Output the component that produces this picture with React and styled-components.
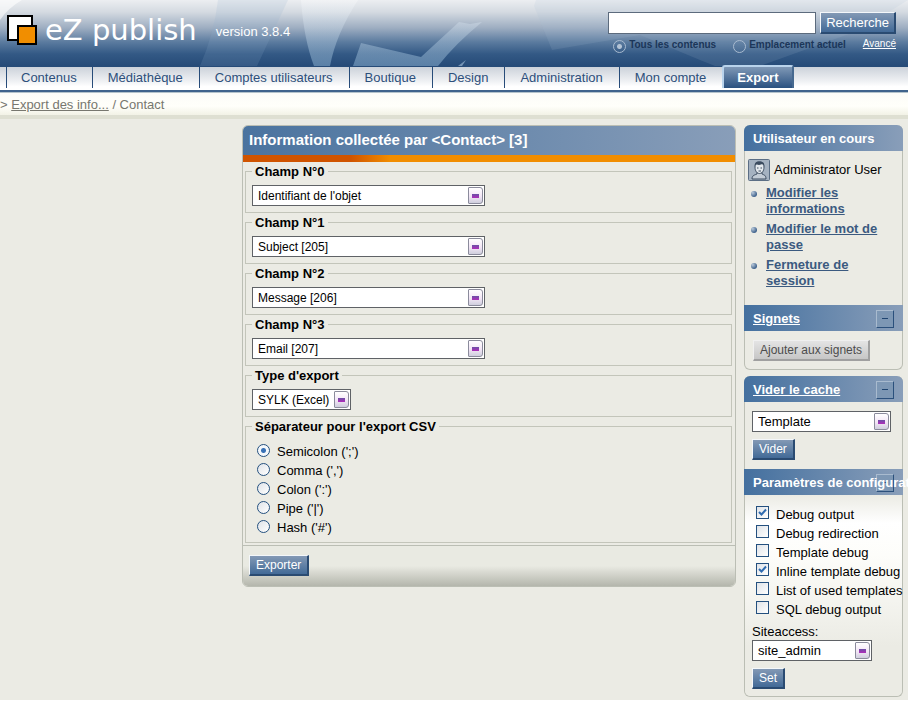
import React from "react";
import styled, { createGlobalStyle, css } from "styled-components";

const GlobalStyle = createGlobalStyle`
  *, *::before, *::after { box-sizing: border-box; }
  html { background: #ffffff; }
  body {
    margin: 0;
    color: #000000;
    font: 13px/16px "Liberation Sans", Arial, sans-serif;
    overflow-x: hidden;
  }
  button, input, select { font: inherit; margin: 0; }
`;

const Page = styled.div`
  background: #ebebe4;
`;

/* ---------- Header ---------- */

const Header = styled.header`
  position: relative;
  display: flex;
  justify-content: space-between;
  height: 66px;
  padding: 0 12px 0 7px;
  overflow: hidden;
  background: linear-gradient(#eceef1 0, #d4dae1 12px, #9dadc1 28px, #5b7b9f 42px, #335985 54px, #264b78 66px);
`;

const Backdrop = styled.svg`
  position: absolute;
  inset: 0;
  width: 100%;
  height: 100%;
`;

const Brand = styled.div`
  position: relative;
  display: flex;
  align-items: center;
  height: 60px;
  color: #ffffff;
`;

const LogoMark = styled.svg`
  width: 30px;
  height: 30px;
`;

const BrandName = styled.span`
  margin-left: 8px;
  font: 400 29px/36px "DejaVu Sans", Verdana, sans-serif;
`;

const Version = styled.span`
  margin: 3px 0 0 19px;
`;

const SearchForm = styled.form`
  position: relative;
  display: grid;
  align-content: start;
  gap: 3px;
  padding-top: 12px;
`;

const SearchLine = styled.div`
  display: flex;
  gap: 4px;
  align-items: center;
`;

const SearchInput = styled.input`
  width: 208px;
  height: 22px;
  padding: 0 4px;
  border: 1px solid #5c6b7d;
  background: #ffffff;
`;

const ScopeLine = styled.div`
  display: flex;
  justify-content: space-between;
  padding-left: 5px;
  font-size: 10px;
`;

const ScopeLabel = styled.label`
  display: flex;
  align-items: center;
  gap: 3px;
  color: #1b3659;
  font-weight: bold;
`;

const ScopeRadio = styled.input`
  appearance: none;
  width: 13px;
  height: 13px;
  margin-top: 2px;
  border: 1px solid #a9bbd0;
  border-radius: 50%;
  &:checked {
    background: radial-gradient(circle, #b3c3d5 0 2px, transparent 3px);
  }
`;

const AdvancedLink = styled.a`
  color: #ffffff;
  line-height: 14px;
`;

const Button = styled.button`
  height: ${(p) => (p.$tall ? 22 : 21)}px;
  padding: 0 ${(p) => (p.$tall ? 7 : 6)}px;
  white-space: nowrap;
  font-size: ${(p) => (p.$tall ? 13 : 12)}px;
  line-height: 18px;
  ${(p) =>
    p.$tall &&
    css`
      padding: 0 5px;
    `}
  ${(p) =>
    p.$muted
      ? css`
          color: #4c4c4c;
          border-style: solid;
          border-color: #f0f0f0 #a0a0a0 #a0a0a0 #f0f0f0;
          border-width: 1px 2px 2px 1px;
          background: linear-gradient(#e4e4e4, #c6c6c6);
        `
      : css`
          color: #ffffff;
          border-style: solid;
          border-color: #f4f7fa #2a4b72 #2a4b72 #f4f7fa;
          border-width: 1px 2px 2px 1px;
          background: linear-gradient(#8399b5, #426a97);
        `}
`;

/* ---------- Tabs and path ---------- */

const Tabs = styled.nav`
  display: flex;
  align-items: flex-end;
  height: 26px;
  padding: 0 0 2px 6px;
  border-top: 1px solid #264b78;
  border-bottom: 2px solid #3f638c;
  background: linear-gradient(#ccd2da, #eef0f3 60%, #ffffff 85%);
`;

const Tab = styled.a`
  height: 21px;
  padding: 0 16px 0 15px;
  border-left: 1px solid #274c79;
  color: #2d4f7b;
  line-height: 21px;
  text-decoration: none;
  white-space: nowrap;
  &:first-child { padding: 0 15px 0 14px; }
  ${(p) =>
    p.$active &&
    css`
      position: relative;
      height: 23px;
      padding: 0 13px;
      border: 2px solid #b9d3ec;
      border-right-color: #46698f;
      border-bottom: 0;
      border-radius: 3px 3px 0 0;
      background: linear-gradient(#7f98b6, #2a5180);
      color: #ffffff;
      font-weight: bold;
    `}
`;

const Path = styled.nav`
  height: 27px;
  padding-top: 4px;
  border-top: 1px solid #b4c3cb;
  border-bottom: 4px solid #dedfd2;
  background: linear-gradient(#fcfcf8, #fffffa 60%, #f2f2e6);
  color: #77776f;
  white-space: pre;
`;

const PathLink = styled.a`
  color: #77776f;
`;

/* ---------- Content ---------- */

const Columns = styled.div`
  display: flex;
  align-items: flex-start;
  gap: 8px;
  padding: 6px 5px 3px 0;
`;

const LeftColumn = styled.div`
  flex: 0 0 234px;
`;

const Panel = styled.form`
  flex: 1;
  min-width: 0;
  border: 1px solid #bbbeb4;
  border-radius: 6px;
  overflow: hidden;
`;

const PanelTitle = styled.h1`
  margin: -1px -1px 0;
  padding: 7px;
  background: linear-gradient(90deg, #4a739f, #899eb9);
  color: #ffffff;
  font-size: 15px;
  line-height: 16px;
`;

const Stripe = styled.div`
  height: 7px;
  margin: 0 -1px;
  background: linear-gradient(90deg, #d05400 22%, #f18d00 30%);
`;

const Fields = styled.div`
  padding: 0 3px 2px 2px;
`;

const Fieldset = styled.fieldset`
  min-width: 0;
  margin: 0;
  padding: ${(p) => (p.$last ? "5px 6px 4px" : "5px 6px 6px")};
  border: 1px solid #c3c5ba;
`;

const Legend = styled.legend`
  padding: 2px 3px 0;
  font-weight: bold;
`;

const PanelFooter = styled.div`
  height: 41px;
  padding: 9px 6px;
  border-top: 1px solid #bbbeb4;
  background: linear-gradient(#e9eae2 50%, #d9dad2 65%, #b4b6ac);
`;

const SelectBox = styled.span`
  position: relative;
  display: block;
  width: ${(p) => p.$width}px;
  max-width: 100%;
`;

const NativeSelect = styled.select`
  appearance: none;
  display: block;
  width: 100%;
  height: 21px;
  padding: 0 20px 0 5px;
  border: 1px solid #5f6266;
  border-radius: 0;
  background: #ffffff;
  color: #000000;
  font-size: ${(p) => (p.$large ? 13 : 12)}px;
`;

const SelectMark = styled.span`
  position: absolute;
  top: 2px;
  right: 2px;
  display: grid;
  place-items: center;
  width: 15px;
  height: 17px;
  border: 1px solid #8b8b9c;
  border-radius: 1px 3px 3px 1px;
  background: linear-gradient(#ffffff, #f3e6f6 55%, #cfcfdd);
  pointer-events: none;
  &::after {
    content: "";
    width: 7px;
    height: 4px;
    background: linear-gradient(#6a50a5, #b02cba);
  }
`;

const OptionList = styled.div`
  display: grid;
  grid-auto-rows: 19px;
  padding: ${(p) => (p.$inset ? "3px 5px 0" : "0 4px")};
`;

const Option = styled.label`
  display: flex;
  align-items: flex-start;
  gap: 7px;
  line-height: ${(p) => (p.$tight ? 17 : 19)}px;
  white-space: nowrap;
`;

const Radio = styled.input`
  appearance: none;
  flex: none;
  width: 13px;
  height: 13px;
  margin-top: 1px;
  border: 1px solid #24507f;
  border-radius: 50%;
  background: linear-gradient(135deg, #dfe3e8, #ffffff);
  &:checked {
    background: radial-gradient(circle, #3871b6 0 2px, #f4f8fc 3px);
  }
`;

const CheckFrame = styled.span`
  position: relative;
  display: block;
  width: 13px;
  height: 13px;
  margin-top: 1px;
`;

const Checkbox = styled.input`
  appearance: none;
  display: block;
  width: 13px;
  height: 13px;
  border: 1px solid #24507f;
  background: linear-gradient(135deg, #dfe3e8, #ffffff);
  & + svg { visibility: hidden; }
  &:checked + svg { visibility: visible; }
`;

const CheckMark = styled.svg`
  position: absolute;
  inset: 0;
  pointer-events: none;
`;

/* ---------- Sidebar ---------- */

const Sidebar = styled.aside`
  display: grid;
  flex: 0 0 159px;
  gap: 6px;
  min-width: 0;
`;

const SideBox = styled.div`
  min-width: 0;
  border: 1px solid #bbbeb4;
  border-top: 0;
  border-radius: 6px;
`;

const SideHeading = styled.div`
  display: flex;
  align-items: center;
  height: 26px;
  margin: 0 -1px;
  padding: 1px 9px 0;
  border-radius: ${(p) => (p.$first ? "6px 6px 0 0" : "0")};
  background: linear-gradient(90deg, #44709f, #899eb9);
  color: #ffffff;
`;

const SideTitle = styled.h2`
  position: relative;
  z-index: 1;
  flex: 1;
  min-width: 0;
  margin: 0;
  font-size: 13px;
  line-height: 17px;
  white-space: nowrap;
`;

const TitleLink = styled.a`
  color: #ffffff;
`;

const Collapse = styled.button`
  flex: none;
  display: grid;
  place-items: center;
  width: 18px;
  height: 18px;
  padding: 0;
  border: 1px solid;
  border-color: #a9bbcf #2b507c #2b507c #a9bbcf;
  background: #7d97b4;
  &::after {
    content: "";
    width: 6px;
    height: 1px;
    background: #1f4470;
  }
`;

const SideBody = styled.div`
  padding: ${(p) => p.$pad};
  ${(p) =>
    p.$glow &&
    css`
      border-radius: 0 0 6px 6px;
      background: linear-gradient(#ebebe4, #ffffff 14%, #fdfdfa 30%, #ebebe4 75%);
    `}
`;

const UserLine = styled.div`
  display: flex;
  align-items: center;
  gap: 4px;
  white-space: nowrap;
`;

const Avatar = styled.svg`
  width: 22px;
  height: 22px;
`;

const LinkList = styled.ul`
  display: grid;
  gap: 4px;
  margin: 4px 0 0;
  padding: 0;
  list-style: none;
`;

const LinkItem = styled.li`
  display: flex;
  gap: 9px;
  align-items: flex-start;
  padding-left: 3px;
  &::before {
    content: "";
    flex: none;
    width: 6px;
    height: 6px;
    margin-top: 6px;
    border-radius: 50%;
    background: radial-gradient(circle at 30% 30%, #b9c9da, #3f628c 70%);
  }
`;

const SideLink = styled.a`
  color: #3b5a80;
  font-weight: bold;
`;

const Stack = styled.div`
  display: grid;
  justify-items: start;
  gap: 7px;
`;

const SiteaccessLabel = styled.label`
  display: block;
  margin-top: 4px;
  line-height: 17px;
`;

function Select({ id, width, options, large, label }) {
  return (
    <SelectBox $width={width}>
      <NativeSelect id={id} $large={large} aria-label={label}>
        {options.map((o) => (
          <option key={o}>{o}</option>
        ))}
      </NativeSelect>
      <SelectMark aria-hidden="true" />
    </SelectBox>
  );
}

const TABS = ["Contenus", "Médiathèque", "Comptes utilisateurs", "Boutique", "Design", "Administration", "Mon compte"];

const FIELDS = ["Identifiant de l'objet", "Subject [205]", "Message [206]", "Email [207]"];

const SEPARATORS = ["Semicolon (';')", "Comma (',')", "Colon (':')", "Pipe ('|')", "Hash ('#')"];

const DEBUG_OPTIONS = [
  ["Debug output", true],
  ["Debug redirection", false],
  ["Template debug", false],
  ["Inline template debug", true],
  ["List of used templates", false],
  ["SQL debug output", false],
];

const stop = (e) => e.preventDefault();

export default function App() {
  return (
    <>
      <GlobalStyle />
      <Page>
        <Header>
          <Backdrop viewBox="0 0 908 66" preserveAspectRatio="xMinYMin slice" aria-hidden="true">
            <defs>
              <linearGradient id="haze" x1="0" y1="0" x2="0" y2="66" gradientUnits="userSpaceOnUse">
                <stop offset="0" stopColor="#fff" stopOpacity="0.3" />
                <stop offset="0.5" stopColor="#cfe0ee" stopOpacity="0.35" />
                <stop offset="1" stopColor="#8fb6d6" stopOpacity="0.5" />
              </linearGradient>
            </defs>
            <path d="M0 0H22Q8 8 0 20Z" fill="#fff" opacity="0.6" />
            <path d="M218 0H288L257 66H200Q214 34 218 0Z" fill="#8fb0cc" opacity="0.16" />
            <path d="M301 0H358Q336 34 330 66H314Q304 40 301 0Z" fill="url(#haze)" />
            <path d="M361 43L421 57L459 22L470 24L482 22Q455 44 438 66H353Z" fill="url(#haze)" />
            <path d="M466 60L462 66H458Z" fill="#a9c5dd" opacity="0.6" />
            <path d="M534 6L552 50L640 35L700 60L715 66H760L860 30L908 0H536Z" fill="#a8c0d6" opacity="0.14" />
          </Backdrop>
          <Brand>
            <LogoMark viewBox="0 0 30 30" aria-hidden="true">
              <rect x="1" y="1" width="24" height="24" fill="#fff" stroke="#000" strokeWidth="2" />
              <rect x="11" y="11" width="18" height="18" fill="#f18e00" stroke="#000" strokeWidth="2" />
            </LogoMark>
            <BrandName>eZ publish</BrandName>
            <Version>version 3.8.4</Version>
          </Brand>
          <SearchForm onSubmit={stop}>
            <SearchLine>
              <SearchInput type="text" aria-label="Recherche" />
              <Button $tall type="submit">Recherche</Button>
            </SearchLine>
            <ScopeLine>
              <ScopeLabel>
                <ScopeRadio type="radio" name="scope" defaultChecked />
                Tous les contenus
              </ScopeLabel>
              <ScopeLabel>
                <ScopeRadio type="radio" name="scope" />
                Emplacement actuel
              </ScopeLabel>
              <AdvancedLink href="#avance">Avancé</AdvancedLink>
            </ScopeLine>
          </SearchForm>
        </Header>

        <Tabs>
          {TABS.map((t) => (
            <Tab key={t} href="#onglet">{t}</Tab>
          ))}
          <Tab href="#export" $active>Export</Tab>
        </Tabs>

        <Path>
          {"> "}
          <PathLink href="#infos">Export des info...</PathLink>
          {" / Contact"}
        </Path>

        <Columns>
          <LeftColumn />
          <Panel onSubmit={stop}>
            <PanelTitle>Information collectée par &lt;Contact&gt; [3]</PanelTitle>
            <Stripe />
            <Fields>
              {FIELDS.map((f, i) => (
                <Fieldset key={f}>
                  <Legend>Champ N°{i}</Legend>
                  <Select width={233} options={[f]} label={`Champ N°${i}`} />
                </Fieldset>
              ))}
              <Fieldset>
                <Legend>Type d'export</Legend>
                <Select width={99} options={["SYLK (Excel)"]} label="Type d'export" />
              </Fieldset>
              <Fieldset $last>
                <Legend>Séparateur pour l'export CSV</Legend>
                <OptionList $inset>
                  {SEPARATORS.map((s, i) => (
                    <Option key={s} $tight>
                      <Radio type="radio" name="separator" defaultChecked={i === 0} />
                      {s}
                    </Option>
                  ))}
                </OptionList>
              </Fieldset>
            </Fields>
            <PanelFooter>
              <Button type="submit">Exporter</Button>
            </PanelFooter>
          </Panel>

          <Sidebar>
            <SideBox>
              <SideHeading $first>
                <SideTitle>Utilisateur en cours</SideTitle>
              </SideHeading>
              <SideBody $pad="8px 3px 16px">
                <UserLine>
                  <Avatar viewBox="0 0 22 22" aria-hidden="true">
                    <rect x="0.5" y="0.5" width="21" height="21" rx="1" fill="#a5b2c1" stroke="#5b6e85" />
                    <path d="M4 20C4 16 7 16 9 15V13H14V15C16 16 18 16 18 20Z" fill="#c3ccd6" stroke="#3c4c60" />
                    <path d="M7 8C7 4 9 3 11.500 3S16 4 16 8C16 12 14 14.500 11.500 14.500S7 12 7 8Z" fill="#e3e8ed" stroke="#3c4c60" />
                    <path d="M7 8C7 5 9 5 11 6L13 5.500C15 5 16 6 16 8C17 3 14 2.500 11.500 2.500S6 3 7 8Z" fill="#3c4c60" />
                    <path d="M9 9H10.500M12.500 9H14M10.500 12H13" stroke="#3c4c60" />
                  </Avatar>
                  Administrator User
                </UserLine>
                <LinkList>
                  <LinkItem><SideLink href="#infos">Modifier les informations</SideLink></LinkItem>
                  <LinkItem><SideLink href="#passe">Modifier le mot de passe</SideLink></LinkItem>
                  <LinkItem><SideLink href="#session">Fermeture de session</SideLink></LinkItem>
                </LinkList>
              </SideBody>
              <SideHeading>
                <SideTitle><TitleLink href="#signets">Signets</TitleLink></SideTitle>
                <Collapse type="button" aria-label="Réduire les signets" />
              </SideHeading>
              <SideBody $pad="9px 8px 8px">
                <Stack><Button $muted type="button">Ajouter aux signets</Button></Stack>
              </SideBody>
            </SideBox>

            <SideBox>
              <SideHeading $first>
                <SideTitle><TitleLink href="#cache">Vider le cache</TitleLink></SideTitle>
                <Collapse type="button" aria-label="Réduire le cache" />
              </SideHeading>
              <SideBody $pad="9px 7px 9px">
                <Stack>
                  <Select width={139} large options={["Template"]} label="Cache à vider" />
                  <Button type="button">Vider</Button>
                </Stack>
              </SideBody>
              <SideHeading>
                <SideTitle>Paramètres de configuration</SideTitle>
                <Collapse type="button" aria-label="Réduire les paramètres" />
              </SideHeading>
              <SideBody $pad="10px 7px 7px" $glow>
                <OptionList>
                  {DEBUG_OPTIONS.map(([name, on]) => (
                    <Option key={name}>
                      <CheckFrame>
                        <Checkbox type="checkbox" defaultChecked={on} />
                        <CheckMark width="13" height="13" viewBox="0 0 13 13" aria-hidden="true">
                          <path d="M3 6L5.500 8.500L10 3.500" fill="none" stroke="#2f6bb0" strokeWidth="2" />
                        </CheckMark>
                      </CheckFrame>
                      {name}
                    </Option>
                  ))}
                </OptionList>
                <SiteaccessLabel htmlFor="siteaccess">Siteaccess:</SiteaccessLabel>
                <Stack>
                  <Select id="siteaccess" width={120} large options={["site_admin"]} />
                  <Button type="button">Set</Button>
                </Stack>
              </SideBody>
            </SideBox>
          </Sidebar>
        </Columns>
      </Page>
    </>
  );
}
